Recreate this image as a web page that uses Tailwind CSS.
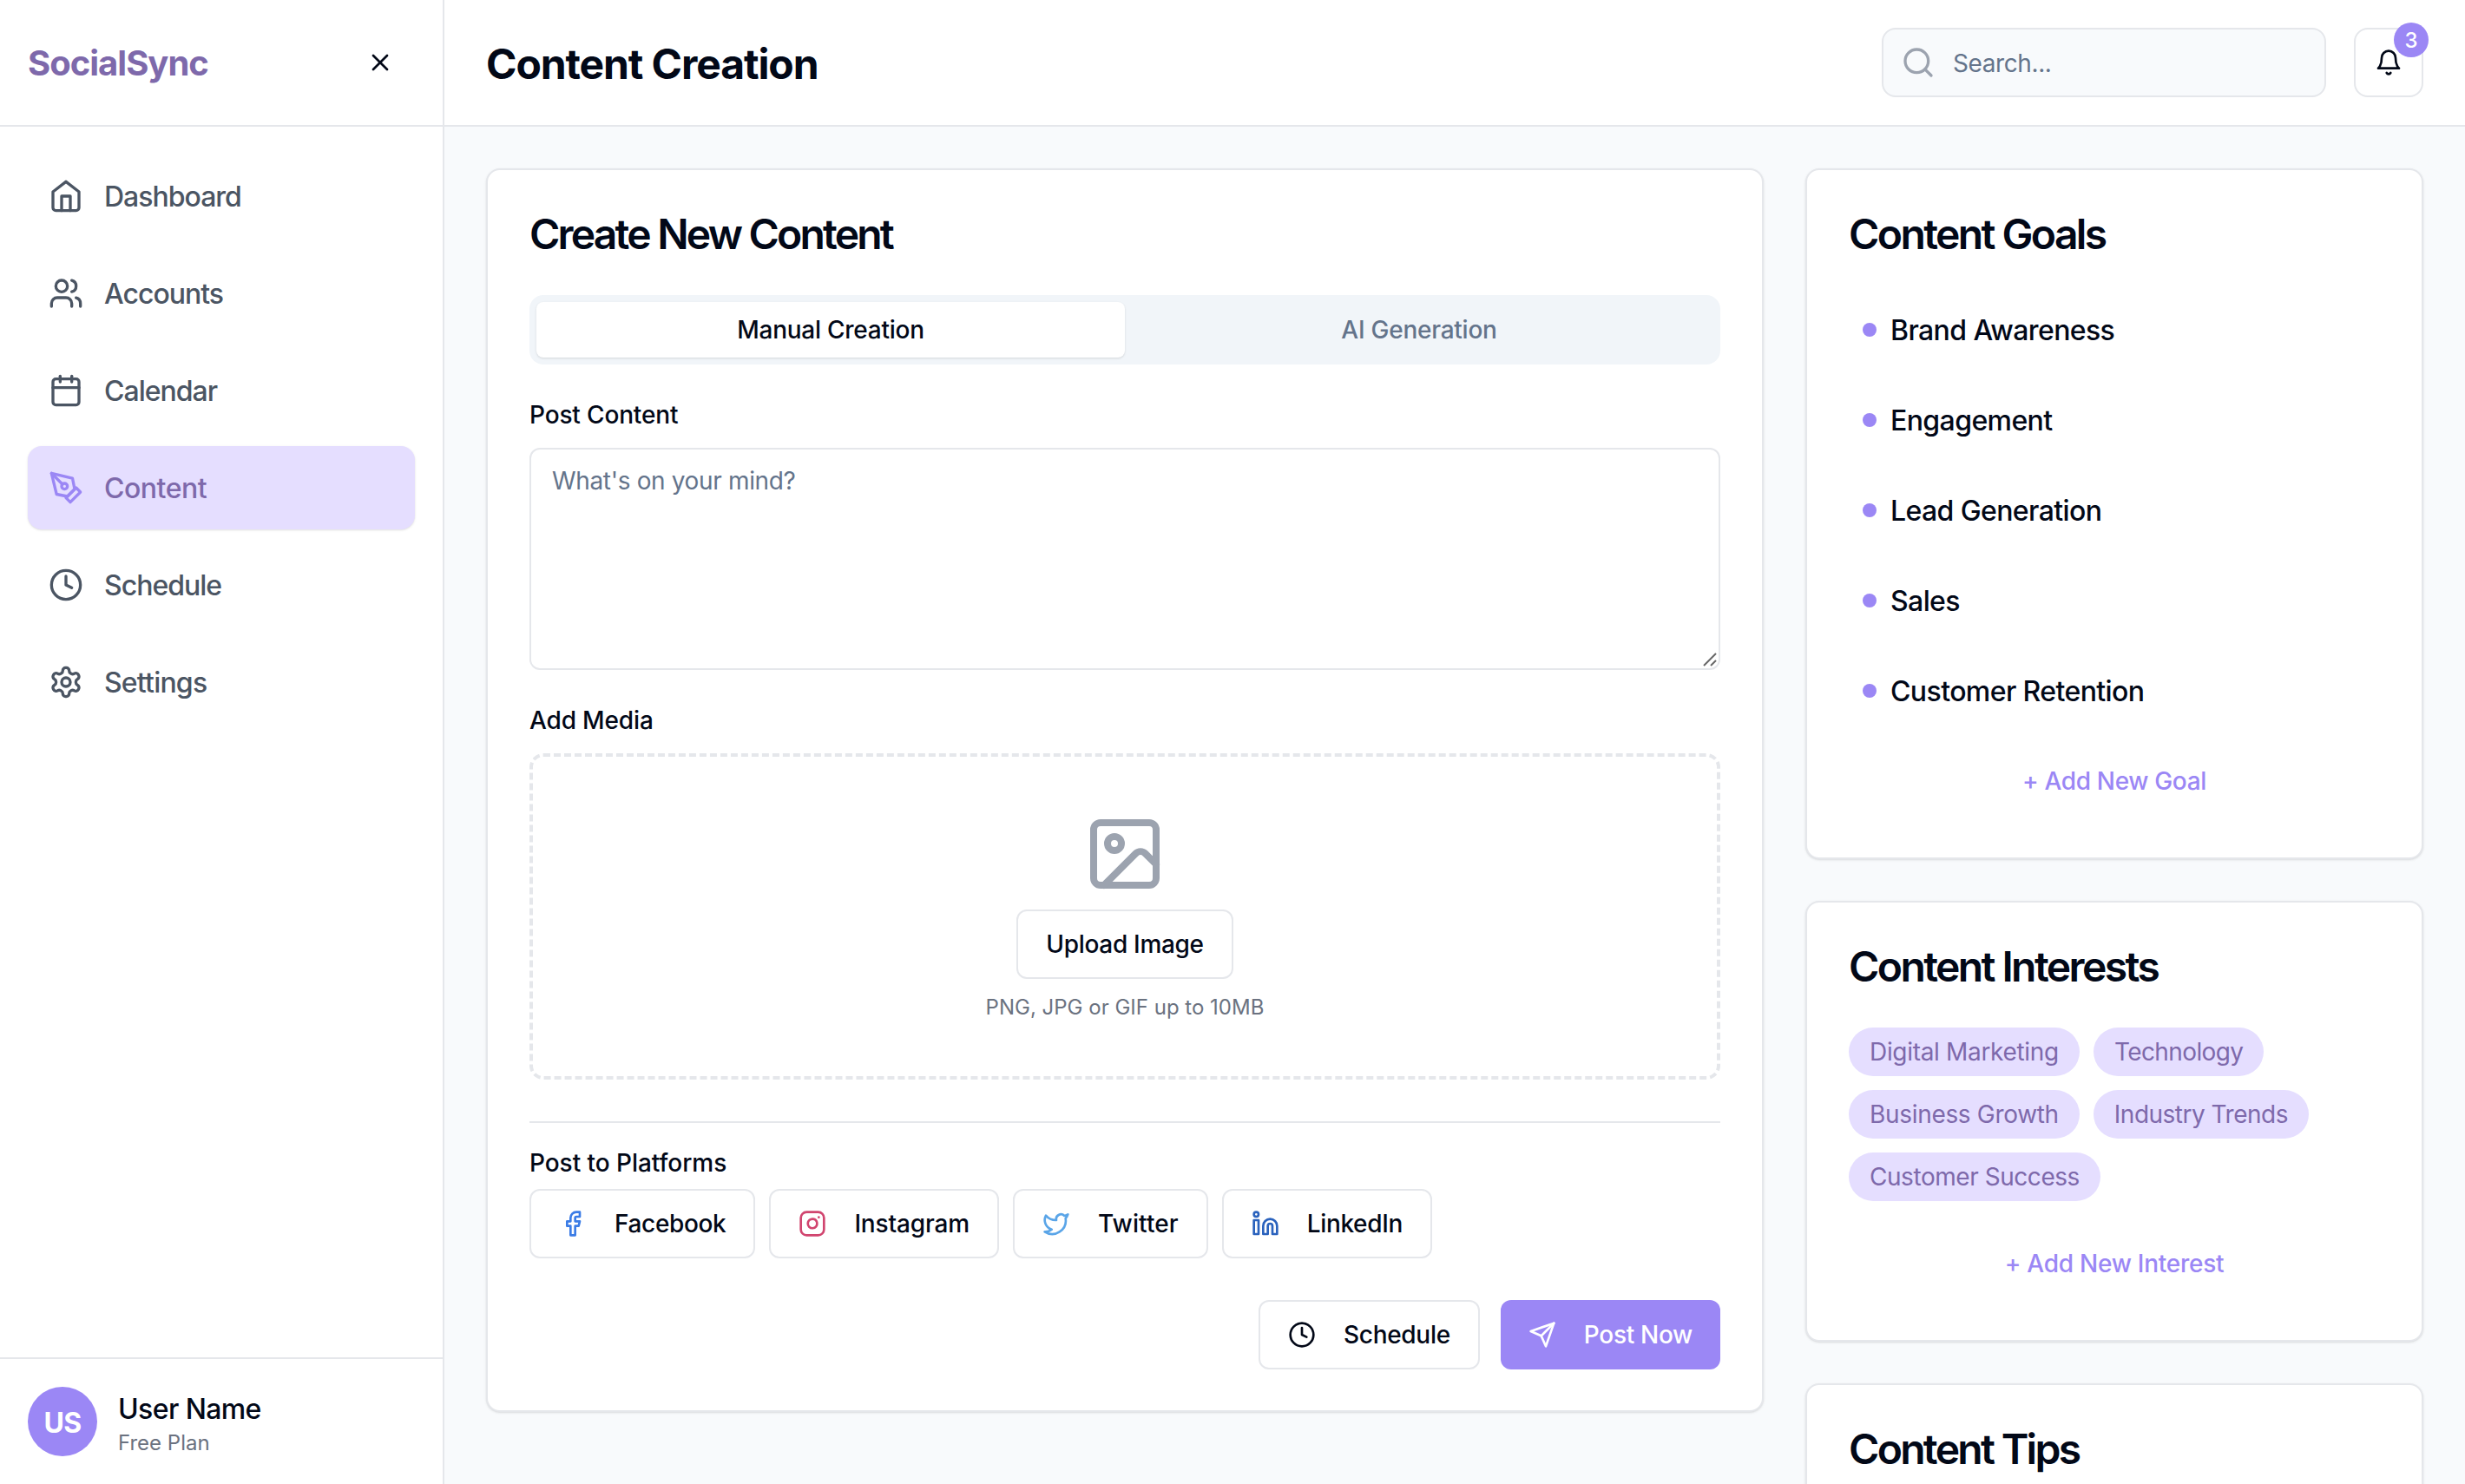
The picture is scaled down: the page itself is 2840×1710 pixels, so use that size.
<!DOCTYPE html>
<html lang="en">
<head>
    <meta charset="UTF-8">
    <meta name="viewport" content="width=device-width, initial-scale=1.0">
    <title>SocialSync - Content Creation</title>
    <script src="https://cdn.jsdelivr.net/npm/@tailwindcss/browser@4"></script>
</head>
<body class="font-[Inter,sans-serif] text-[#020817] bg-[#f8fafc] h-screen overflow-hidden">
    <div class="flex h-screen overflow-hidden">
        <!-- Sidebar -->
        <aside class="w-[512px] shrink-0 h-full bg-white border-r-2 border-[#e5e7eb] flex flex-col">
            <div class="h-[146px] shrink-0 border-b-2 border-[#e5e7eb] px-8 flex items-center justify-between">
                <span class="text-[40px] leading-[56px] font-bold tracking-[-1px] text-[#7e69ab] translate-y-px">SocialSync</span>
                <button class="w-20 h-20 flex items-center justify-center text-[#020817]">
                    <svg class="w-8 h-8" viewBox="0 0 24 24" fill="none" stroke="currentColor" stroke-width="2" stroke-linecap="round" stroke-linejoin="round"><path d="M18 6 6 18"/><path d="m6 6 12 12"/></svg>
                </button>
            </div>
            <nav class="flex-1 p-8 flex flex-col gap-4 text-[32px] leading-[48px] font-medium tracking-[-1px] text-[#4b5563]">
                <a class="h-24 px-6 flex items-center gap-6 rounded-2xl">
                    <svg class="w-10 h-10" viewBox="0 0 24 24" fill="none" stroke="currentColor" stroke-width="2" stroke-linecap="round" stroke-linejoin="round"><path d="m3 9 9-7 9 7v11a2 2 0 0 1-2 2H5a2 2 0 0 1-2-2z"/><polyline points="9 22 9 12 15 12 15 22"/></svg>
                    <span class="translate-y-px">Dashboard</span>
                </a>
                <a class="h-24 px-6 flex items-center gap-6 rounded-2xl">
                    <svg class="w-10 h-10" viewBox="0 0 24 24" fill="none" stroke="currentColor" stroke-width="2" stroke-linecap="round" stroke-linejoin="round"><path d="M16 21v-2a4 4 0 0 0-4-4H6a4 4 0 0 0-4 4v2"/><circle cx="9" cy="7" r="4"/><path d="M22 21v-2a4 4 0 0 0-3-3.87"/><path d="M16 3.13a4 4 0 0 1 0 7.75"/></svg>
                    <span class="translate-y-px">Accounts</span>
                </a>
                <a class="h-24 px-6 flex items-center gap-6 rounded-2xl">
                    <svg class="w-10 h-10" viewBox="0 0 24 24" fill="none" stroke="currentColor" stroke-width="2" stroke-linecap="round" stroke-linejoin="round"><rect width="18" height="18" x="3" y="4" rx="2" ry="2"/><line x1="16" x2="16" y1="2" y2="6"/><line x1="8" x2="8" y1="2" y2="6"/><line x1="3" x2="21" y1="10" y2="10"/></svg>
                    <span class="translate-y-px">Calendar</span>
                </a>
                <a class="h-24 px-6 flex items-center gap-6 rounded-2xl bg-[#e5deff] text-[#7e69ab] shadow-sm">
                    <svg class="w-10 h-10 text-[#9b87f5]" viewBox="0 0 24 24" fill="none" stroke="currentColor" stroke-width="2" stroke-linecap="round" stroke-linejoin="round"><path d="m12 19 7-7 3 3-7 7-3-3z"/><path d="m18 13-1.5-7.5L2 2l3.5 14.5L13 18l5-5z"/><path d="m2 2 7.586 7.586"/><circle cx="11" cy="11" r="2"/></svg>
                    <span class="translate-y-px tracking-[-0.5px]">Content</span>
                </a>
                <a class="h-24 px-6 flex items-center gap-6 rounded-2xl">
                    <svg class="w-10 h-10" viewBox="0 0 24 24" fill="none" stroke="currentColor" stroke-width="2" stroke-linecap="round" stroke-linejoin="round"><circle cx="12" cy="12" r="10"/><polyline points="12 6 12 12 16 14"/></svg>
                    <span class="translate-y-px">Schedule</span>
                </a>
                <a class="h-24 px-6 flex items-center gap-6 rounded-2xl">
                    <svg class="w-10 h-10" viewBox="0 0 24 24" fill="none" stroke="currentColor" stroke-width="2" stroke-linecap="round" stroke-linejoin="round"><path d="M12.22 2h-.44a2 2 0 0 0-2 2v.18a2 2 0 0 1-1 1.73l-.43.25a2 2 0 0 1-2 0l-.15-.08a2 2 0 0 0-2.73.73l-.22.38a2 2 0 0 0 .73 2.73l.15.1a2 2 0 0 1 1 1.72v.51a2 2 0 0 1-1 1.74l-.15.09a2 2 0 0 0-.73 2.73l.22.38a2 2 0 0 0 2.73.73l.15-.08a2 2 0 0 1 2 0l.43.25a2 2 0 0 1 1 1.73V20a2 2 0 0 0 2 2h.44a2 2 0 0 0 2-2v-.18a2 2 0 0 1 1-1.73l.43-.25a2 2 0 0 1 2 0l.15.08a2 2 0 0 0 2.73-.73l.22-.39a2 2 0 0 0-.73-2.73l-.15-.08a2 2 0 0 1-1-1.74v-.5a2 2 0 0 1 1-1.74l.15-.09a2 2 0 0 0 .73-2.73l-.22-.38a2 2 0 0 0-2.73-.73l-.15.08a2 2 0 0 1-2 0l-.43-.25a2 2 0 0 1-1-1.73V4a2 2 0 0 0-2-2z"/><circle cx="12" cy="12" r="3"/></svg>
                    <span class="translate-y-px tracking-[-0.8px]">Settings</span>
                </a>
            </nav>
            <div class="border-t-2 border-[#e5e7eb] p-8 flex items-center gap-6">
                <div class="w-20 h-20 rounded-full bg-[#9b87f5] text-white flex items-center justify-center text-[32px] font-bold tracking-[-0.8px]"><span class="translate-y-0.5">US</span></div>
                <div class="translate-y-0.5">
                    <p class="mt-[2px] text-[32px] leading-[40px] font-medium tracking-[-0.6px]">User Name</p>
                    <p class="mt-[3px] text-2xl leading-8 text-[#6b7280]">Free Plan</p>
                </div>
            </div>
        </aside>

        <!-- Main -->
        <div class="flex-1 min-w-0 flex flex-col h-full">
            <header class="h-[146px] shrink-0 bg-white border-b-2 border-[#e5e7eb] px-12 flex items-center justify-between">
                <h1 class="text-5xl leading-none font-bold tracking-[-1.1px] translate-y-0.5">Content Creation</h1>
                <div class="flex items-center gap-8">
                    <div class="relative w-[512px] h-20">
                        <svg class="absolute left-[22px] top-5 w-10 h-10 text-[#9ca3af]" viewBox="0 0 24 24" fill="none" stroke="currentColor" stroke-width="2" stroke-linecap="round" stroke-linejoin="round"><circle cx="11" cy="11" r="8"/><path d="m21 21-4.3-4.3"/></svg>
                        <input type="text" placeholder="Search..." class="w-full h-full pl-20 pr-6 pt-[2px] rounded-2xl border-2 border-[#e5e7eb] bg-[#f8fafc] text-[28px] tracking-[-0.4px] placeholder:text-[#64748b] outline-none">
                    </div>
                    <button class="relative w-20 h-20 rounded-2xl border-2 border-[#e5e7eb] bg-white flex items-center justify-center">
                        <svg class="w-8 h-8" viewBox="0 0 24 24" fill="none" stroke="currentColor" stroke-width="2" stroke-linecap="round" stroke-linejoin="round"><path d="M6 8a6 6 0 0 1 12 0c0 7 3 9 3 9H3s3-2 3-9"/><path d="M10.3 21a1.94 1.94 0 0 0 3.4 0"/></svg>
                        <span class="absolute -top-2 -right-2 w-10 h-10 rounded-full bg-[#9b87f5] text-white text-2xl font-medium flex items-center justify-center"><span class="translate-y-px">3</span></span>
                    </button>
                </div>
            </header>

            <main class="flex-1 min-h-0 overflow-hidden p-12">
                <div class="grid grid-cols-3 gap-12 items-start">
                    <!-- Create card -->
                    <section class="col-span-2 bg-white rounded-2xl border-2 border-[#e5e7eb] shadow-sm px-12 pt-12 pb-[47px]">
                        <h2 class="text-5xl leading-none font-semibold tracking-[-2.8px] translate-y-0.5 mb-12">Create New Content</h2>

                        <div class="h-20 p-2 rounded-2xl bg-[#f1f5f9] grid grid-cols-2 text-[28px] font-medium tracking-[-0.25px]">
                            <button class="rounded-lg bg-white shadow-sm">Manual Creation</button>
                            <button class="rounded-lg text-[#64748b]">AI Generation</button>
                        </div>

                        <label class="block mt-11 mb-6 text-[28px] leading-7 font-medium tracking-[-0.15px]">Post Content</label>
                        <div class="relative">
                            <textarea placeholder="What's on your mind?" class="block w-full h-64 px-6 py-4 rounded-xl border-2 border-[#e5e7eb] bg-white text-[28px] leading-10 tracking-[-0.35px] placeholder:text-[#64748b] outline-none resize-none"></textarea>
                            <svg class="absolute right-1 bottom-1 w-4 h-4 text-[#666666]" viewBox="0 0 16 16" fill="none" stroke="currentColor" stroke-width="2"><path d="M1 15 15 1"/><path d="M9 15l6-6"/></svg>
                        </div>

                        <label class="block mt-11 mb-6 text-[28px] leading-7 font-medium tracking-[-0.15px]">Add Media</label>
                        <div class="h-[376px] rounded-2xl border-4 border-dashed border-[#e5e7eb] flex flex-col items-center pt-16">
                            <svg class="w-24 h-24 text-[#9ca3af]" viewBox="0 0 24 24" fill="none" stroke="currentColor" stroke-width="2" stroke-linecap="round" stroke-linejoin="round"><rect width="18" height="18" x="3" y="3" rx="2" ry="2"/><circle cx="9" cy="9" r="2"/><path d="m21 15-3.086-3.086a2 2 0 0 0-2.828 0L6 21"/></svg>
                            <button class="mt-4 h-20 px-8 rounded-xl border-2 border-[#e5e7eb] bg-white text-[28px] font-medium tracking-[-0.3px]">Upload Image</button>
                            <p class="mt-4 text-2xl leading-8 text-[#6b7280] translate-y-px">PNG, JPG or GIF up to 10MB</p>
                        </div>

                        <hr class="mt-12 border-t-2 border-[#e5e7eb]">

                        <label class="block mt-8 mb-4 text-[28px] leading-7 font-medium tracking-[-0.05px]">Post to Platforms</label>
                        <div class="flex gap-4 text-[28px] font-medium tracking-[-0.35px]">
                            <button class="h-20 px-8 flex items-center gap-8 rounded-xl border-2 border-[#e5e7eb] bg-white">
                                <svg class="w-8 h-8 text-[#3b7ce6]" viewBox="0 0 24 24" fill="none" stroke="currentColor" stroke-width="2" stroke-linecap="round" stroke-linejoin="round"><path d="M18 2h-3a5 5 0 0 0-5 5v3H7v4h3v8h4v-8h3l1-4h-4V7a1 1 0 0 1 1-1h3z"/></svg>
                                Facebook
                            </button>
                            <button class="h-20 px-8 flex items-center gap-8 rounded-xl border-2 border-[#e5e7eb] bg-white tracking-[-0.15px]">
                                <svg class="w-8 h-8 text-[#d1456f]" viewBox="0 0 24 24" fill="none" stroke="currentColor" stroke-width="2" stroke-linecap="round" stroke-linejoin="round"><rect width="20" height="20" x="2" y="2" rx="5" ry="5"/><path d="M16 11.37A4 4 0 1 1 12.63 8 4 4 0 0 1 16 11.37z"/><line x1="17.5" x2="17.51" y1="6.5" y2="6.5"/></svg>
                                Instagram
                            </button>
                            <button class="h-20 px-8 flex items-center gap-8 rounded-xl border-2 border-[#e5e7eb] bg-white tracking-[0.1px]">
                                <svg class="w-8 h-8 text-[#5aa5e8]" viewBox="0 0 24 24" fill="none" stroke="currentColor" stroke-width="2" stroke-linecap="round" stroke-linejoin="round"><path d="M22 4s-.7 2.1-2 3.4c1.6 10-9.4 17.3-18 11.6 2.2.1 4.4-.6 6-2C3 15.5.5 9.6 3 5c2.2 2.6 5.6 4.1 9 4-.9-4.2 4-6.6 7-3.8 1.1 0 3-1.2 3-1.2z"/></svg>
                                Twitter
                            </button>
                            <button class="h-20 px-8 flex items-center gap-8 rounded-xl border-2 border-[#e5e7eb] bg-white">
                                <svg class="w-8 h-8 text-[#2a62bd]" viewBox="0 0 24 24" fill="none" stroke="currentColor" stroke-width="2" stroke-linecap="round" stroke-linejoin="round"><path d="M16 8a6 6 0 0 1 6 6v7h-4v-7a2 2 0 0 0-2-2 2 2 0 0 0-2 2v7h-4v-7a6 6 0 0 1 6-6z"/><rect width="4" height="12" x="2" y="9"/><circle cx="4" cy="4" r="2"/></svg>
                                LinkedIn
                            </button>
                        </div>

                        <div class="mt-12 flex justify-end gap-6 text-[28px] font-medium tracking-[-0.3px]">
                            <button class="h-20 px-8 flex items-center gap-8 rounded-xl border-2 border-[#e5e7eb] bg-white">
                                <svg class="w-8 h-8" viewBox="0 0 24 24" fill="none" stroke="currentColor" stroke-width="2" stroke-linecap="round" stroke-linejoin="round"><circle cx="12" cy="12" r="10"/><polyline points="12 6 12 12 16 14"/></svg>
                                Schedule
                            </button>
                            <button class="h-20 px-8 flex items-center gap-8 rounded-xl bg-[#9b87f5] text-white">
                                <svg class="w-8 h-8" viewBox="0 0 24 24" fill="none" stroke="currentColor" stroke-width="2" stroke-linecap="round" stroke-linejoin="round"><path d="m22 2-7 20-4-9-9-4Z"/><path d="M22 2 11 13"/></svg>
                                Post Now
                            </button>
                        </div>
                    </section>

                    <!-- Right column -->
                    <div class="flex flex-col gap-12">
                        <section class="bg-white rounded-2xl border-2 border-[#e5e7eb] shadow-sm p-12">
                            <h2 class="text-5xl leading-none font-semibold tracking-[-2.6px] translate-y-0.5 mb-12">Content Goals</h2>
                            <ul class="flex flex-col gap-6 text-[32px] font-medium tracking-[-0.6px]">
                                <li class="h-20 pl-4 flex items-center gap-4"><span class="w-4 h-4 rounded-full bg-[#9b87f5]"></span><span class="translate-y-px">Brand Awareness</span></li>
                                <li class="h-20 pl-4 flex items-center gap-4"><span class="w-4 h-4 rounded-full bg-[#9b87f5]"></span><span class="translate-y-px">Engagement</span></li>
                                <li class="h-20 pl-4 flex items-center gap-4"><span class="w-4 h-4 rounded-full bg-[#9b87f5]"></span><span class="translate-y-px">Lead Generation</span></li>
                                <li class="h-20 pl-4 flex items-center gap-4"><span class="w-4 h-4 rounded-full bg-[#9b87f5]"></span><span class="translate-y-px">Sales</span></li>
                                <li class="h-20 pl-4 flex items-center gap-4"><span class="w-4 h-4 rounded-full bg-[#9b87f5]"></span><span class="translate-y-px">Customer Retention</span></li>
                            </ul>
                            <button class="mt-6 w-full h-20 text-[28px] font-medium tracking-[-0.35px] text-[#9b87f5]">+ Add New Goal</button>
                        </section>

                        <section class="bg-white rounded-2xl border-2 border-[#e5e7eb] shadow-sm p-12">
                            <h2 class="text-5xl leading-none font-semibold tracking-[-2.6px] translate-y-0.5 mb-12">Content Interests</h2>
                            <div class="flex flex-wrap gap-4 text-[28px] leading-10 tracking-[-0.32px] text-[#7e69ab]">
                                <span class="px-6 py-2 rounded-full bg-[#e5deff]">Digital Marketing</span>
                                <span class="px-6 py-2 rounded-full bg-[#e5deff] tracking-[-0.6px]">Technology</span>
                                <span class="px-6 py-2 rounded-full bg-[#e5deff]">Business Growth</span>
                                <span class="px-6 py-2 rounded-full bg-[#e5deff] tracking-[-0.5px]">Industry Trends</span>
                                <span class="px-6 py-2 rounded-full bg-[#e5deff] tracking-[-0.45px]">Customer Success</span>
                            </div>
                            <button class="mt-8 w-full h-20 text-[28px] font-medium tracking-[-0.25px] text-[#9b87f5]">+ Add New Interest</button>
                        </section>

                        <section class="bg-white rounded-2xl border-2 border-[#e5e7eb] shadow-sm p-12">
                            <h2 class="text-5xl leading-none font-semibold tracking-[-2.7px] translate-y-0.5">Content Tips</h2>
                        </section>
                    </div>
                </div>
            </main>
        </div>
    </div>
</body>
</html>
